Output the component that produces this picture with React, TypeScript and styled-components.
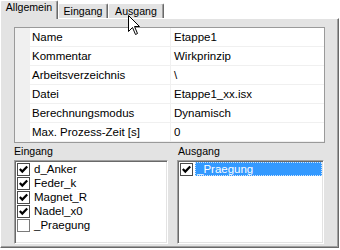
import React from "react";
import styled, { createGlobalStyle } from "styled-components";

const Global = createGlobalStyle`
  html, body { margin: 0; padding: 0; background: #ffffff; }
  body { font-family: "Liberation Sans", Arial, sans-serif; font-size: 11.5px; color: #000; }
  #root { width: 340px; height: 250px; }
`;

const Window = styled.div`
  position: relative;
  width: 340px;
  height: 250px;
  overflow: hidden;
  background: #ffffff;
  display: flex;
  flex-direction: column;
`;

const TabStrip = styled.div`
  display: flex;
  align-items: flex-end;
  height: 18px;
`;

const Tab = styled.div<{ $active?: boolean; $w: number }>`
  box-sizing: border-box;
  position: relative;
  z-index: ${(p) => (p.$active ? 2 : 0)};
  width: ${(p) => p.$w}px;
  height: ${(p) => (p.$active ? 19 : 15)}px;
  margin-bottom: ${(p) => (p.$active ? -1 : 0)}px;
  padding-top: ${(p) => (p.$active ? 0 : 1)}px;
  background: #e3e3e3;
  border-top: 1px solid #ffffff;
  border-left: 1px solid #ffffff;
  border-right: 1px solid #696969;
  border-top-left-radius: 2px;
  border-top-right-radius: 2px;
  box-shadow: inset -1px 0 0 #a0a0a0;
  font-size: 10.6px;
  line-height: 13px;
  text-align: center;
  white-space: nowrap;
`;

const Panel = styled.div`
  box-sizing: border-box;
  width: 339px;
  height: 230px;
  background: #e3e3e3;
  border-top: 1px solid #ffffff;
  border-left: 1px solid #ffffff;
  border-right: 1px solid #696969;
  border-bottom: 1px solid #696969;
  box-shadow: inset -1px -1px 0 #a0a0a0;
  padding: 8px 13px 3px 13px;
  display: flex;
  flex-direction: column;
`;

const PropGrid = styled.div`
  box-sizing: border-box;
  border: 1px solid #9a9a9a;
  background: #f0f0f0;
  display: grid;
  grid-template-columns: 14px 140px 1fr;
  grid-auto-rows: 18px;
  gap: 1px;
  padding-bottom: 1px;
`;

const Gutter = styled.div`
  background: #f0f0f0;
`;

const Cell = styled.div<{ $value?: boolean }>`
  background: #ffffff;
  line-height: 18px;
  padding-left: ${(p) => (p.$value ? 3 : 2)}px;
  white-space: nowrap;
  overflow: hidden;
`;

const Lists = styled.div`
  display: grid;
  grid-template-columns: 154px 147px;
  column-gap: 9px;
`;

const Group = styled.div`
  display: flex;
  flex-direction: column;
`;

const Caption = styled.div<{ $indent?: number }>`
  height: 17px;
  line-height: 17px;
  font-size: 10.6px;
  padding-left: ${(p) => p.$indent ?? 0}px;
`;

const ListBox = styled.div`
  box-sizing: border-box;
  height: 84px;
  background: #ffffff;
  border: 1px solid;
  border-color: #a0a0a0 #ffffff #ffffff #a0a0a0;
  box-shadow: inset 1px 1px 0 #696969, inset -1px -1px 0 #e3e3e3;
  padding: 1px 1px 0 2px;
  display: flex;
  flex-direction: column;
`;

const Item = styled.div`
  display: flex;
  align-items: center;
  height: 14px;
`;

const Box = styled.div<{ $checked?: boolean }>`
  box-sizing: border-box;
  width: 13px;
  height: 13px;
  flex: none;
  background: #ffffff;
  border: 1px solid ${(p) => (p.$checked ? "#4a4a4a" : "#7a7a7a")};
  margin-right: 2px;
  display: flex;
  align-items: center;
  justify-content: center;
`;

const ItemText = styled.div<{ $selected?: boolean }>`
  flex: 1;
  box-sizing: border-box;
  height: 14px;
  line-height: 14px;
  padding: 0 2px;
  white-space: nowrap;
  background: ${(p) => (p.$selected ? "#3399ff" : "transparent")};
  color: ${(p) => (p.$selected ? "#ffffff" : "#000000")};
  outline: ${(p) => (p.$selected ? "1px dotted #cfe6ff" : "none")};
  outline-offset: -1px;
`;

const Cursor = styled.svg`
  position: absolute;
  left: 128px;
  top: 15px;
  z-index: 5;
`;

const CheckMark = () => (
  <svg width="11" height="11" viewBox="0 0 11 11">
    <path d="M1.8 5 L4.3 7.6 L9.2 2.4" fill="none" stroke="#000" strokeWidth="2.2" />
  </svg>
);

type ListEntry = { name: string; checked: boolean; selected?: boolean };

const CheckList = ({ items }: { items: ListEntry[] }) => (
  <ListBox>
    {items.map((it) => (
      <Item key={it.name}>
        <Box $checked={it.checked}>{it.checked && <CheckMark />}</Box>
        <ItemText $selected={it.selected}>{it.name}</ItemText>
      </Item>
    ))}
  </ListBox>
);

const props: [string, string][] = [
  ["Name", "Etappe1"],
  ["Kommentar", "Wirkprinzip"],
  ["Arbeitsverzeichnis", "\\"],
  ["Datei", "Etappe1_xx.isx"],
  ["Berechnungsmodus", "Dynamisch"],
  ["Max. Prozess-Zeit [s]", "0"],
];

const eingang: ListEntry[] = [
  { name: "d_Anker", checked: true },
  { name: "Feder_k", checked: true },
  { name: "Magnet_R", checked: true },
  { name: "Nadel_x0", checked: true },
  { name: "_Praegung", checked: false },
];

const ausgang: ListEntry[] = [{ name: "_Praegung", checked: true, selected: true }];

export default function App() {
  return (
    <Window>
      <Global />
      <TabStrip>
        <Tab $active $w={58}>Allgemein</Tab>
        <Tab $w={50}>Eingang</Tab>
        <Tab $w={56}>Ausgang</Tab>
      </TabStrip>
      <Panel>
        <PropGrid>
          {props.map(([k, v]) => (
            <React.Fragment key={k}>
              <Gutter />
              <Cell>{k}</Cell>
              <Cell $value>{v}</Cell>
            </React.Fragment>
          ))}
        </PropGrid>
        <Lists>
          <Group>
            <Caption>Eingang</Caption>
            <CheckList items={eingang} />
          </Group>
          <Group>
            <Caption $indent={1}>Ausgang</Caption>
            <CheckList items={ausgang} />
          </Group>
        </Lists>
      </Panel>
      <Cursor width="13" height="21" viewBox="0 0 13 21">
        <path
          d="M0.5 0.5 L0.5 16.5 L4.5 12.5 L7.5 19.5 L9.5 18.5 L6.5 11.5 L11.5 11.5 Z"
          fill="#ffffff"
          stroke="#000000"
          strokeWidth="1"
        />
      </Cursor>
    </Window>
  );
}
